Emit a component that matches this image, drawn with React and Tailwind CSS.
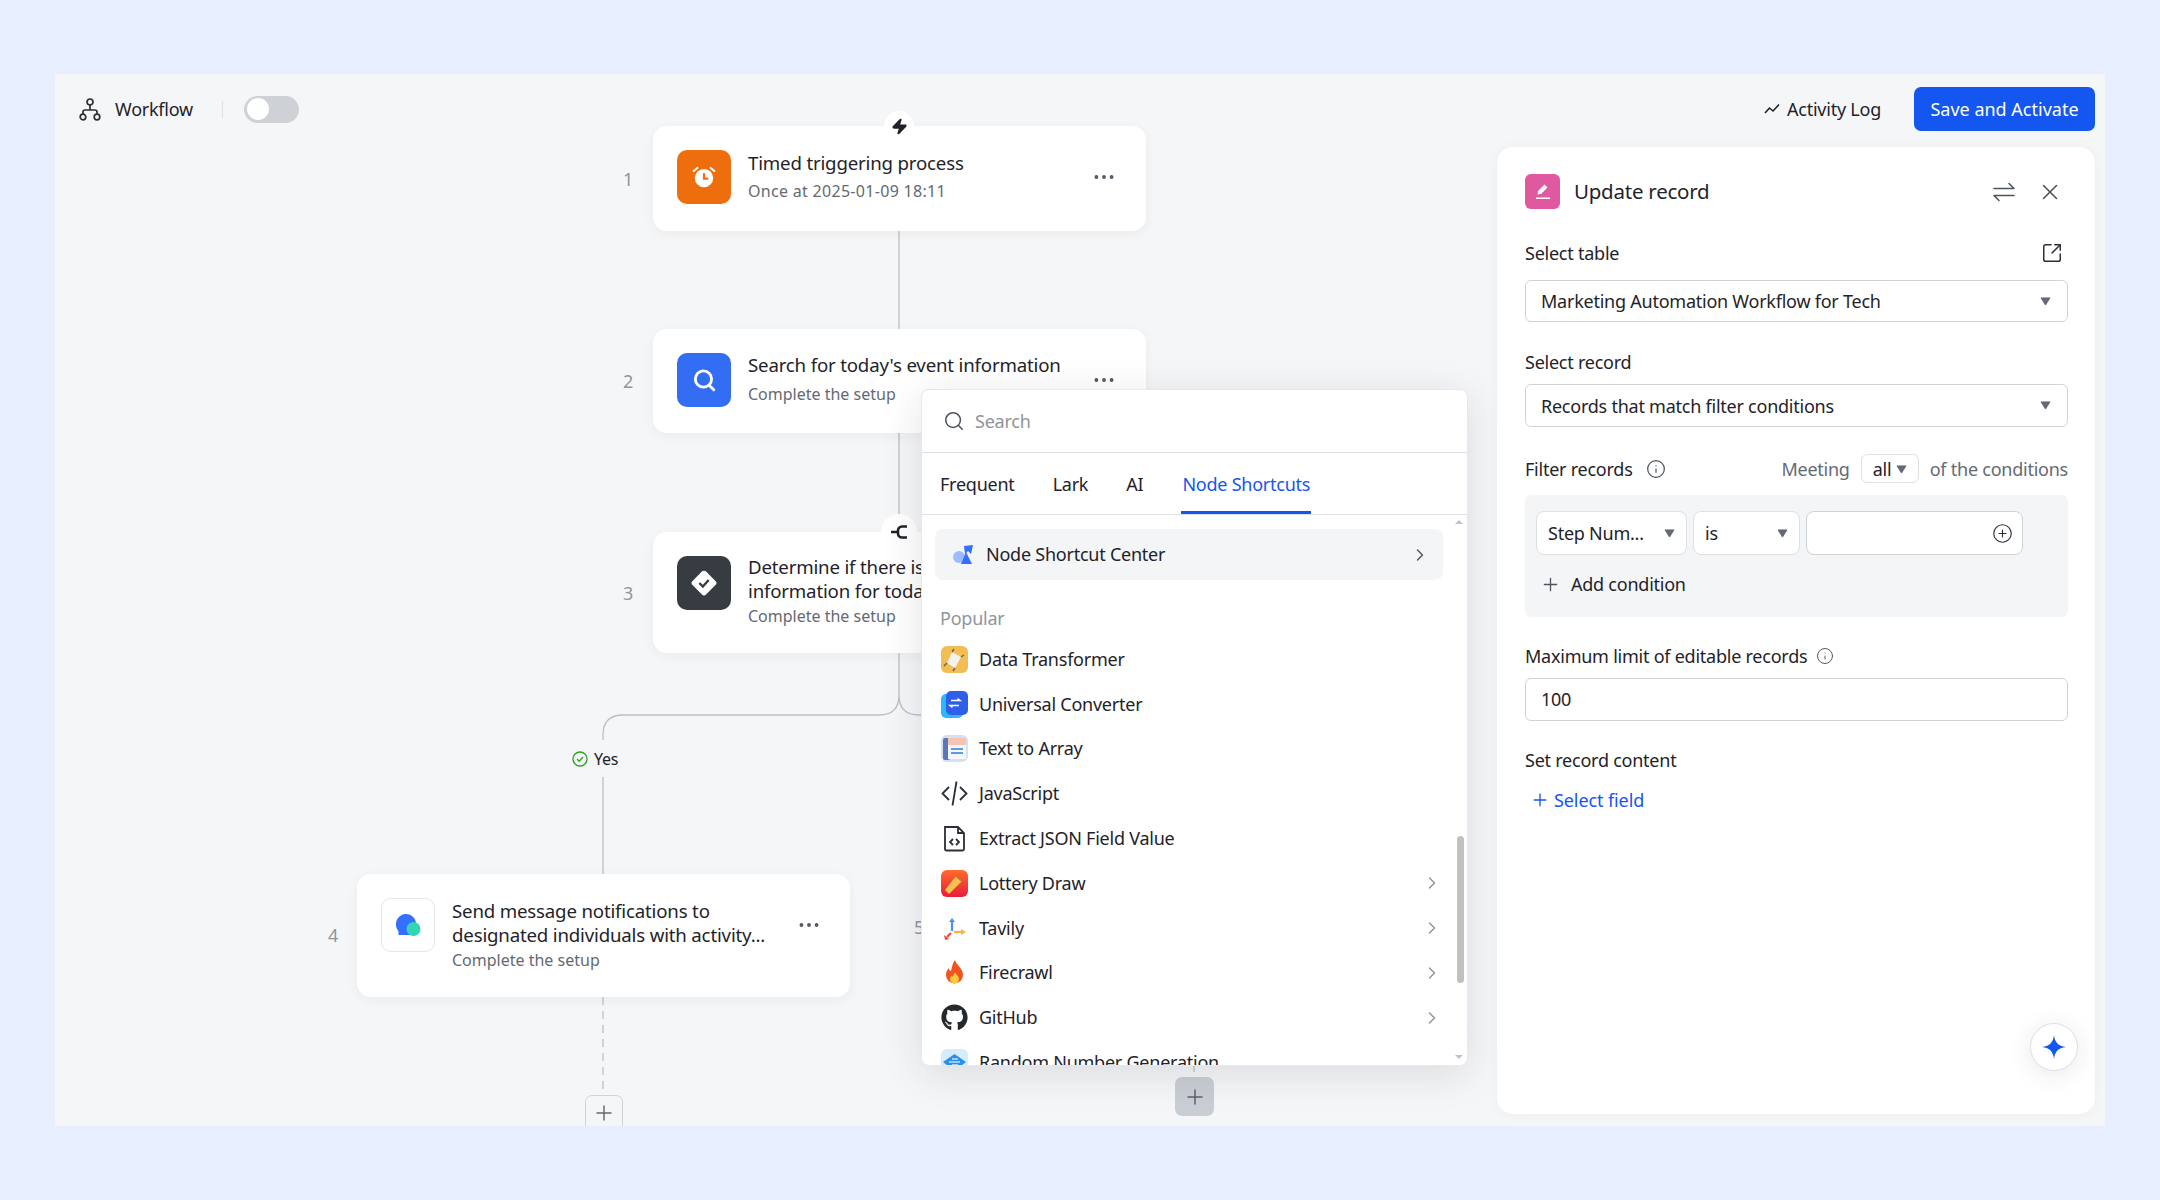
import { useState } from 'react';
import {
  Search, ChevronRight, Plus, X, SquareArrowOutUpRight, Info, CirclePlus, Ellipsis, Zap,
} from 'lucide-react';
import { FaGithub } from 'react-icons/fa';

const Caret = ({ className = '' }) => (
  <svg viewBox="0 0 12 10" className={`h-[9px] w-[11px] ${className}`}>
    <path d="M1 1h10L6 9z" fill="#646a73" stroke="#646a73" strokeLinejoin="round" />
  </svg>
);

const WorkflowIcon = () => (
  <svg viewBox="0 0 22 23" className="h-[23px] w-[22px] text-[#2b2f36]" fill="none" stroke="currentColor" strokeWidth="1.7">
    <circle cx="11" cy="4" r="3" />
    <circle cx="4" cy="19" r="2.8" />
    <circle cx="18" cy="19" r="2.8" />
    <path d="M11 7v5M4 16v-2a2 2 0 0 1 2-2h10a2 2 0 0 1 2 2v2" />
  </svg>
);

const Trend = () => (
  <svg viewBox="0 0 16 12" className="h-[12px] w-[16px]" fill="none" stroke="#1f2329" strokeWidth="1.6" strokeLinejoin="round">
    <path d="M1 10l4.5-5 3.5 3 6-6.5" />
  </svg>
);

const SwapIcon = () => (
  <svg viewBox="0 0 22 20" className="h-[20px] w-[22px]" fill="none" stroke="#4e5560" strokeWidth="1.600" strokeLinecap="round" strokeLinejoin="round">
    <path d="M1 6.500h20L16 1.500M21 13.500H1l5 5" />
  </svg>
);

const Alarm = () => (
  <svg viewBox="0 0 24 24" className="h-[26px] w-[26px]">
    <circle cx="12" cy="13" r="8.500" fill="#fff" />
    <path d="M12 8.500V13.500h4" fill="none" stroke="#ee6d0d" strokeWidth="2" />
    <path d="M2.500 6.500l3.500-3M21.500 6.500l-3.500-3" stroke="#fff" strokeWidth="1.800" strokeLinecap="round" />
  </svg>
);

const Magnifier = () => (
  <svg viewBox="0 0 24 24" className="h-[26px] w-[26px]" fill="none" stroke="#fff" strokeWidth="2.600" strokeLinecap="round">
    <circle cx="11.500" cy="11" r="7.500" />
    <path d="M17 17l4 4" />
  </svg>
);

const Diamond = () => (
  <svg viewBox="0 0 24 24" className="h-[28px] w-[28px]">
    <path d="M12 1.500a2.500 2.500 0 0 1 1.800.7l8 8a2.500 2.500 0 0 1 0 3.600l-8 8a2.500 2.500 0 0 1-3.600 0l-8-8a2.500 2.500 0 0 1 0-3.600l8-8a2.500 2.500 0 0 1 1.800-.7z" fill="#fff" />
    <path d="M8 12l3 3 5-5.500" fill="none" stroke="#373c43" strokeWidth="2" />
  </svg>
);

const Chat = () => (
  <svg viewBox="0 0 26 26" className="h-[26px] w-[26px]">
    <path d="M1 12a10 10 0 1 1 18 6v5H3.500v-3.500A10 10 0 0 1 1 12z" fill="#3370ff" />
    <circle cx="18.500" cy="17" r="7" fill="#32d6b4" />
  </svg>
);

const Branch = () => (
  <svg viewBox="0 0 18 16" className="h-[16px] w-[18px]" fill="none" stroke="#1f2329" strokeWidth="2.600">
    <path d="M17 2.500h-5a4 4 0 0 0-4 4v3a4 4 0 0 0 4 4h5M1 8h7" />
  </svg>
);

const Sparkle = () => (
  <svg viewBox="0 0 24 24" className="h-[24px] w-[24px]">
    <path d="M12 0c1 7.500 4 11 12 12-8 1-11 4.500-12 12-1-7.500-4-11-12-12 8-1 11-4.500 12-12z" fill="#1456f0" />
  </svg>
);

const CenterLogo = () => (
  <svg viewBox="0 0 22 20" className="h-[20px] w-[22px]">
    <circle cx="6" cy="12" r="6" fill="#9dbcff" />
    <path d="M8 19L13 7l6 12z" fill="#3370ff" />
    <path d="M11 1l9-1-2 9-3-3-3 3z" fill="#3370ff" />
  </svg>
);

const DataIcon = () => (
  <svg viewBox="0 0 27 27" className="h-[27px] w-[27px]">
    <rect width="27" height="27" rx="6" fill="#f2bd55" />
    <path d="M11 6l9 5-6 11-8-5z" fill="#f4f2ec" />
    <path d="M6 17l-3 3M14 22l-2 3M11 6l2-3M20 11l3-2" stroke="#6b6558" strokeWidth="1.500" />
  </svg>
);

const ConverterIcon = () => (
  <svg viewBox="0 0 27 27" className="h-[27px] w-[27px]">
    <rect y="3" width="22" height="24" rx="5" fill="#2db7ff" />
    <rect x="5" width="22" height="24" rx="5" fill="#2f5fe8" />
    <path d="M10 9.500h9l-2.500-2M18 14.500H9l2.500 2" fill="none" stroke="#fff" strokeWidth="1.500" />
  </svg>
);

const ArrayIcon = () => (
  <svg viewBox="0 0 27 27" className="h-[27px] w-[27px]">
    <rect width="27" height="27" rx="6" fill="#d7e0ee" />
    <rect x="2" y="3" width="7" height="22" rx="2" fill="#5a78b8" />
    <rect x="7" y="3" width="18" height="7" fill="#f6c3b5" />
    <rect x="7" y="10" width="18" height="14" fill="#f4f7fb" />
    <path d="M10 14h12M10 18h12" stroke="#5f9bde" strokeWidth="2" />
  </svg>
);

const CodeIcon = () => (
  <svg viewBox="0 0 27 27" className="h-[27px] w-[27px]" fill="none" stroke="#2b2f36" strokeWidth="1.800">
    <path d="M8 7l-6.500 6.500L8 20M19 7l6.500 6.500L19 20M15.500 1.500L11.500 25.500" />
  </svg>
);

const JsonFileIcon = () => (
  <svg viewBox="0 0 27 27" className="h-[27px] w-[27px]" fill="none" stroke="#2b2f36" strokeWidth="1.800">
    <path d="M4 2h13l6 6v16a1.500 1.500 0 0 1-1.500 1.500h-16A1.500 1.500 0 0 1 4 24zM17 2v6h6" />
    <path d="M12 14l-3 3 3 3M15 14l3 3-3 3" />
  </svg>
);

const LotteryIcon = () => (
  <svg viewBox="0 0 27 27" className="h-[27px] w-[27px]">
    <defs>
      <linearGradient id="lot" x1="0" y1="0" x2="0" y2="1">
        <stop offset="0" stopColor="#ff6a2b" />
        <stop offset="1" stopColor="#ea1c3c" />
      </linearGradient>
    </defs>
    <rect width="27" height="27" rx="6" fill="url(#lot)" />
    <path d="M4 20L15 6l6 5-13 13z" fill="#f2c14f" />
    <path d="M15 6l6 5" stroke="#c9781f" strokeWidth="2" />
  </svg>
);

const TavilyIcon = () => (
  <svg viewBox="0 0 27 27" className="h-[27px] w-[27px]" fill="none" strokeWidth="2.200">
    <path d="M11 16V6" stroke="#4a90f5" />
    <path d="M8 7l3-4 3 4z" fill="#4a90f5" />
    <path d="M13 17h8" stroke="#f8b73c" />
    <path d="M20 14l5 3-5 3z" fill="#f8b73c" />
    <path d="M10 18l-4 4" stroke="#ee4444" />
    <path d="M3 20l1 5 4-1z" fill="#ee4444" />
  </svg>
);

const FlameIcon = () => (
  <svg viewBox="0 0 27 27" className="h-[27px] w-[27px]">
    <path d="M14 1c1 5 8 8 8 15a8.500 8.500 0 0 1-17 0c0-3 1-5 3-7 0 2 1 3 2 3 1-3 1-7 4-11z" fill="#f4511e" />
    <path d="M14 13c1 3 4 4 4 7a4.500 4.500 0 0 1-9 0c0-2 1-3 2-4 0 1 .5 1.500 1 1.500.5-1.500 1-3 2-4.500z" fill="#ffc93c" />
  </svg>
);

const RandomIcon = () => (
  <svg viewBox="0 0 27 27" className="h-[27px] w-[27px]">
    <rect width="27" height="27" rx="6" fill="#d5ecfb" />
    <path d="M13.500 5L25 13l-11.500 9L2 13z" fill="#2a8fe8" />
    <path d="M8 13h11M11 10h6M11 16h6" stroke="#bfe3ff" strokeWidth="1.500" />
  </svg>
);

const items = [
  { name: 'Data Transformer', icon: <DataIcon /> },
  { name: 'Universal Converter', icon: <ConverterIcon /> },
  { name: 'Text to Array', icon: <ArrayIcon /> },
  { name: 'JavaScript', icon: <CodeIcon /> },
  { name: 'Extract JSON Field Value', icon: <JsonFileIcon /> },
  { name: 'Lottery Draw', icon: <LotteryIcon />, more: true },
  { name: 'Tavily', icon: <TavilyIcon />, more: true },
  { name: 'Firecrawl', icon: <FlameIcon />, more: true },
  { name: 'GitHub', icon: <FaGithub className="h-[27px] w-[27px] text-[#24292e]" />, more: true },
  { name: 'Random Number Generation', icon: <RandomIcon /> },
];

function Connectors() {
  return (
    <svg className="absolute inset-0 h-full w-full" fill="none" stroke="#bbbfc4" strokeWidth="1.300">
      <path d="M844 157V255M844 359V458M844 579V621Q844 641 824 641H568Q548 641 548 661V666M844 621Q844 641 864 641H900" />
      <path d="M548 703V800" />
      <path d="M548 923V1021M1139 990V1003" strokeDasharray="8 6" />
    </svg>
  );
}

function FlowNode({ pos, icon, tile, title, sub, dots, textTop, subGap }) {
  return (
    <div className={`absolute flex items-start rounded-[14px] bg-white pl-[24px] pt-[24px] shadow-[0_3px_12px_rgba(31,35,41,0.05)] ${pos}`}>
      <div className={`flex h-[54px] w-[54px] shrink-0 items-center justify-center rounded-[10px] ${tile}`}>{icon}</div>
      <div className={`ml-[17px] min-w-0 text-[18.670px] leading-[24px] tracking-[-0.18px] text-[#1f2329] ${textTop}`}>
        {title}
        <div className={`text-[16px] leading-[24px] tracking-normal text-[#646a73] ${subGap}`}>{sub}</div>
      </div>
      <Ellipsis className={`absolute h-[26px] w-[26px] text-[#4e5560] ${dots}`} strokeWidth={1.500} />
    </div>
  );
}

function Canvas() {
  return (
    <div className="absolute inset-0">
      <Connectors />
      <span className="absolute left-[568px] top-[92px] text-[18px] text-[#8f959e]">1</span>
      <span className="absolute left-[568px] top-[294px] text-[18px] text-[#8f959e]">2</span>
      <span className="absolute left-[568px] top-[506px] text-[18px] text-[#8f959e]">3</span>
      <span className="absolute left-[273px] top-[848px] text-[18px] text-[#8f959e]">4</span>
      <span className="absolute left-[859px] top-[840px] text-[18px] text-[#8f959e]">5</span>

      <FlowNode
        pos="left-[598px] top-[52px] h-[105px] w-[493px]"
        tile="bg-[#ee6d0d]"
        icon={<Alarm />}
        textTop="mt-[1px]"
        subGap="mt-[4px]"
        title={<div className="whitespace-nowrap">Timed triggering process</div>}
        sub={<span className="tracking-[0.3px]">Once at 2025-01-09 18:11</span>}
        dots="right-[29px] top-[38px]"
      />
      <FlowNode
        pos="left-[598px] top-[255px] h-[104px] w-[493px]"
        tile="bg-[#336df4]"
        icon={<Magnifier />}
        textTop="mt-0"
        subGap="mt-[5px]"
        title={<div className="whitespace-nowrap">Search for today's event information</div>}
        sub="Complete the setup"
        dots="right-[29px] top-[38px]"
      />
      <FlowNode
        pos="left-[598px] top-[458px] h-[121px] w-[493px]"
        tile="bg-[#373c43]"
        icon={<Diamond />}
        textTop="mt-[-1px]"
        subGap="mt-[1px]"
        title={<div className="w-[330px]">Determine if there is activity information for today</div>}
        sub="Complete the setup"
        dots="right-[29px] top-[38px]"
      />
      <FlowNode
        pos="left-[302px] top-[800px] h-[123px] w-[493px]"
        tile="border border-[#e4e6e9] bg-white"
        icon={<Chat />}
        textTop="mt-[1px]"
        subGap="mt-[1px]"
        title={<div className="w-[340px]">Send message notifications to designated individuals with activity...</div>}
        sub="Complete the setup"
        dots="right-[28px] top-[38px]"
      />

      <div className="absolute left-[829px] top-[37px] flex h-[30px] w-[30px] items-center justify-center rounded-full bg-white">
        <Zap className="h-[17px] w-[17px] fill-[#1f2329] text-[#1f2329]" />
      </div>
      <div className="absolute left-[826px] top-[440px] flex h-[36px] w-[36px] items-center justify-center rounded-full bg-white">
        <Branch />
      </div>

      <div className="absolute left-[517px] top-[673px] flex items-center gap-[6px] text-[16px] leading-[24px] text-[#1f2329]">
        <svg viewBox="0 0 16 16" className="h-[16px] w-[16px]" fill="none" stroke="#2ea121" strokeWidth="1.300">
          <circle cx="8" cy="8" r="7" />
          <path d="M5 8l2.200 2.200L11 6" />
        </svg>
        Yes
      </div>

      <div className="absolute left-[530px] top-[1021px] flex h-[44px] w-[38px] items-start justify-center rounded-[7px] border border-[#d0d3d6] bg-[#f5f6f8] pt-[5px]">
        <Plus className="h-[24px] w-[24px] text-[#646a73]" strokeWidth={1.500} />
      </div>
      <div className="absolute left-[1120px] top-[1003px] flex h-[39px] w-[39px] items-center justify-center rounded-[7px] bg-[#c9ced4]">
        <Plus className="h-[24px] w-[24px] text-[#5a626d]" strokeWidth={1.500} />
      </div>
    </div>
  );
}

function NodePicker() {
  return (
    <div className="absolute left-[866px] top-[315px] h-[677px] w-[547px] overflow-hidden rounded-[8px] border border-[#e6e8ea] bg-white shadow-[0_8px_40px_rgba(31,35,41,0.12)]">
      <div className="flex h-[63px] items-center border-b border-[#dee0e3] pl-[21px] text-[18px] text-[#8f959e]">
        <Search className="h-[22px] w-[22px] text-[#4e5560]" strokeWidth={1.700} />
        <span className="ml-[10px]">Search</span>
      </div>
      <div className="flex h-[62px] gap-[38px] border-b border-[#dee0e3] pl-[18px] text-[18px] text-[#1f2329]">
        <div className="flex items-center pt-[2px]">Frequent</div>
        <div className="flex items-center pt-[2px]">Lark</div>
        <div className="flex items-center pt-[2px]">AI</div>
        <div className="flex items-center border-b-[3px] border-[#1456f0] pl-[1px] pr-[1px] pt-[5px] text-[#1456f0]">Node Shortcuts</div>
      </div>
      <div className="relative">
        <div className="ml-[13px] mr-[24px] mt-[14px] flex h-[51px] items-center rounded-[8px] bg-[#f4f5f7] pl-[18px] pr-[13px] text-[18px] text-[#1f2329]">
          <CenterLogo />
          <span className="ml-[11px] flex-1">Node Shortcut Center</span>
          <ChevronRight className="h-[20px] w-[20px] text-[#4e5560]" strokeWidth={1.700} />
        </div>
        <div className="ml-[18px] mt-[25px] text-[18px] leading-[26px] text-[#8f959e]">Popular</div>
        <div className="mt-[6px]">
          {items.map((it) => (
            <div key={it.name} className="flex h-[44.800px] items-center pl-[19px] pr-[25px] text-[18px] text-[#1f2329]">
              <span className="flex h-[27px] w-[27px] items-center justify-center">{it.icon}</span>
              <span className="ml-[11px] flex-1 whitespace-nowrap">{it.name}</span>
              {it.more && <ChevronRight className="h-[20px] w-[20px] text-[#8f959e]" strokeWidth={1.700} />}
            </div>
          ))}
        </div>
      </div>
      <div className="absolute right-[3px] top-[446px] h-[147px] w-[7px] rounded-full bg-[#c1c1c1]" />
      <div className="absolute right-[4px] top-[130px] h-0 w-0 border-x-[4px] border-b-[4px] border-x-transparent border-b-[#c1c1c1]" />
      <div className="absolute right-[4px] bottom-[6px] h-0 w-0 border-x-[4px] border-t-[4px] border-x-transparent border-t-[#c1c1c1]" />
    </div>
  );
}

function SelectBox({ text, box }) {
  return (
    <div className={`flex items-center justify-between rounded-[6px] border border-[#d0d3d6] pl-[15px] pr-[16px] text-[#1f2329] ${box}`}>
      <span className="pt-[1px]">{text}</span>
      <Caret />
    </div>
  );
}

function RecordPanel() {
  return (
    <div className="relative ml-auto mr-[10px] h-[967px] w-[598px] rounded-[16px] bg-white pl-[28px] pr-[27px] pt-[27px] text-[18px] text-[#1f2329] shadow-[0_0_12px_rgba(31,35,41,0.04)]">
      <div className="flex h-[35px] items-center">
        <div className="flex h-[35px] w-[35px] items-center justify-center rounded-[6px] bg-[#e0589f]">
          <svg viewBox="0 0 20 20" className="h-[20px] w-[20px]" fill="#fff">
            <path d="M11.500 2.500l3 3-6.500 6.500-3.500.5.500-3.500zM3 15.500h14V17H3z" />
          </svg>
        </div>
        <span className="ml-[14px] flex-1 text-[20.500px]">Update record</span>
        <SwapIcon />
        <X className="ml-[22px] mr-[5px] h-[26px] w-[26px] text-[#4e5560]" strokeWidth={1.500} />
      </div>

      <div className="mt-[31px] flex h-[26px] items-center justify-between pr-[5px] leading-[26px]">
        Select table
        <SquareArrowOutUpRight className="h-[22px] w-[22px] text-[#2b2f36]" strokeWidth={1.600} />
      </div>
      <SelectBox text="Marketing Automation Workflow for Tech" box="mt-[14px] h-[42px]" />

      <div className="mt-[27px] h-[26px] leading-[26px]">Select record</div>
      <SelectBox text="Records that match filter conditions" box="mt-[9px] h-[43px]" />

      <div className="mt-[27px] flex h-[29px] items-center">
        <span className="pt-[1px]">Filter records</span>
        <Info className="ml-[13px] h-[20px] w-[20px] text-[#4e5560]" strokeWidth={1.500} />
        <span className="ml-auto pt-[1px] text-[#646a73]">Meeting</span>
        <div className="ml-[11px] flex h-[29px] w-[58px] items-center gap-[5px] rounded-[6px] border border-[#dee0e3] pl-[11px] pt-[1px]">
          all
          <Caret />
        </div>
        <span className="ml-[11px] pt-[1px] text-[#646a73]">of the conditions</span>
      </div>

      <div className="mt-[12px] h-[122px] rounded-[6px] bg-[#f4f5f7] pl-[11px] pt-[16px]">
        <div className="flex gap-[6px]">
          <div className="flex h-[44px] w-[151px] items-center justify-between rounded-[8px] border border-[#dee0e3] bg-white pl-[11px] pr-[11px]">
            Step Num...
            <Caret />
          </div>
          <div className="flex h-[44px] w-[107px] items-center justify-between rounded-[8px] border border-[#dee0e3] bg-white pl-[11px] pr-[11px]">
            is
            <Caret />
          </div>
          <div className="flex h-[44px] w-[217px] items-center justify-end rounded-[8px] border border-[#d0d3d6] bg-white pr-[9px]">
            <CirclePlus className="h-[21px] w-[21px] text-[#2b2f36]" strokeWidth={1.300} />
          </div>
        </div>
        <div className="mt-[16px] flex h-[26px] items-center pl-[4px]">
          <Plus className="h-[21px] w-[21px] text-[#4e5560]" strokeWidth={1.500} />
          <span className="ml-[10px]">Add condition</span>
        </div>
      </div>

      <div className="mt-[26px] flex h-[26px] items-center">
        Maximum limit of editable records
        <Info className="ml-[9px] h-[18px] w-[18px] text-[#4e5560]" strokeWidth={1.300} />
      </div>
      <div className="mt-[9px] flex h-[43px] items-center rounded-[6px] border border-[#d0d3d6] pl-[15px]">100</div>

      <div className="mt-[26px] h-[26px] leading-[26px]">Set record content</div>
      <div className="mt-[14px] flex h-[26px] items-center pl-[5px] tracking-[-0.1px] text-[#1456f0]">
        <Plus className="h-[20px] w-[20px]" strokeWidth={1.600} />
        <span className="ml-[4px]">Select field</span>
      </div>

      <div className="absolute bottom-[43px] right-[17px] flex h-[48px] w-[48px] items-center justify-center rounded-full border border-[#dee0e3] bg-white shadow-[0_4px_24px_rgba(31,35,41,0.10)]">
        <Sparkle />
      </div>
    </div>
  );
}

export default function App() {
  const [on, setOn] = useState(false);

  return (
    <div className="h-[1200px] bg-[#e8efff] px-[55px] pt-[74px] font-['Noto_Sans',sans-serif] tracking-[-0.24px]">
      <div className="relative h-[1052px] overflow-hidden bg-[#f5f6f8]">
        <Canvas />
        <NodePicker />

        <div className="relative mb-[16px] mt-[13px] flex h-[44px] items-center pl-[24px] pr-[10px] text-[18px] text-[#1f2329]">
          <WorkflowIcon />
          <span className="ml-[14px]">Workflow</span>
          <div className="ml-[29px] h-[17px] w-px bg-[#dee0e3]" />
          <button
            onClick={() => setOn(!on)}
            className="ml-[21px] flex h-[27px] w-[55px] items-center rounded-full bg-[#ced1d5] pl-[3px]"
          >
            <span className="h-[22px] w-[22px] rounded-full bg-white" />
          </button>
          <div className="ml-auto flex items-center gap-[7px]">
            <Trend />
            Activity Log
          </div>
          <button className="ml-[33px] h-[44px] w-[181px] rounded-[7px] bg-[#1456f0] tracking-normal text-white">Save and Activate</button>
        </div>

        <RecordPanel />
      </div>
    </div>
  );
}
